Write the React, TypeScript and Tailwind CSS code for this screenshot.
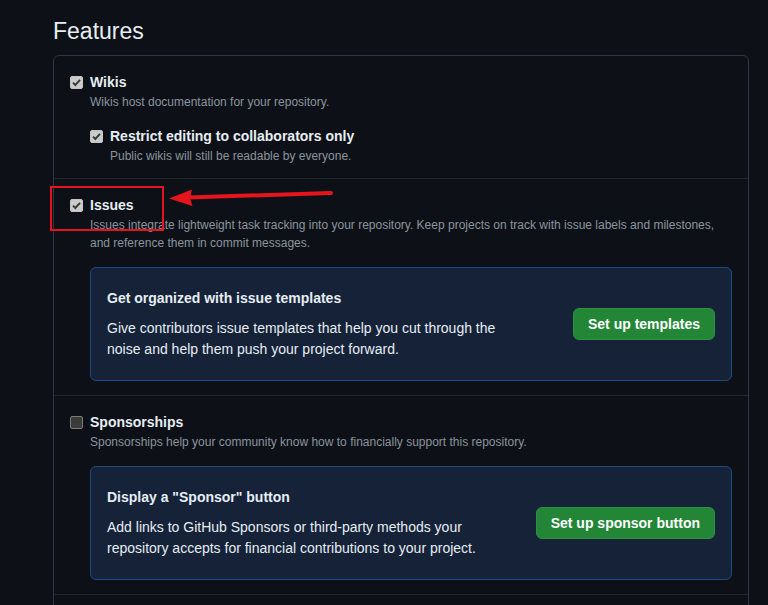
import React from "react";

function Check({ checked }: { checked: boolean }) {
  return (
    <span
      className={
        "relative mt-[4px] h-[13px] w-[13px] shrink-0 rounded-[2px] border " +
        (checked ? "border-[#c4c4c4] bg-[#cbcbcb]" : "border-[#7a7a7a] bg-[#3b3b3b]")
      }
    >
      {checked && (
        <svg viewBox="0 0 13 13" className="absolute -left-px -top-px h-[13px] w-[13px]">
          <path d="M3 6.6 L5.3 9 L10 3.8" fill="none" stroke="#3a3a3a" strokeWidth="1.9" />
        </svg>
      )}
    </span>
  );
}

function Item({
  checked,
  label,
  desc,
  children,
}: {
  checked: boolean;
  label: string;
  desc: string;
  children?: React.ReactNode;
}) {
  return (
    <div className="flex gap-[7px]">
      <Check checked={checked} />
      <div className="flex-1">
        <div className="text-[14px] font-bold leading-[21px] text-[#e6edf3]">{label}</div>
        <p className="text-[12px] leading-[18px] text-[#8b949e]">{desc}</p>
        {children}
      </div>
    </div>
  );
}

function Promo({ title, body, action }: { title: string; body: string; action: string }) {
  return (
    <div className="mt-[15px] flex items-center justify-between rounded-[6px] border border-[#1d4a80] bg-[#152238] px-4 py-5">
      <div>
        <h4 className="mb-[9px] text-[14px] font-bold leading-[21px] text-[#e6edf3]">{title}</h4>
        <p className="max-w-[400px] text-[14px] leading-[21px] text-[#e6edf3]">{body}</p>
      </div>
      <button className="h-[32px] shrink-0 rounded-[6px] border border-[#2f8f42] bg-[#238636] px-[14px] text-[14px] font-bold text-white">
        {action}
      </button>
    </div>
  );
}

export default function App() {
  return (
    <div
      className="relative h-[605px] overflow-hidden bg-[#0d1117] pl-[53px] pr-[19px]"
      style={{ fontFamily: '"Liberation Sans", Arial, sans-serif' }}
    >
      <h2 className="pt-[15px] pb-[7px] text-[23px] leading-[33px] text-[#e6edf3]">Features</h2>
      <div className="rounded-[6px] border border-[#30363d]">
        <section className="border-b border-[#21262d] px-4 pt-4 pb-[13px]">
          <Item checked label="Wikis" desc="Wikis host documentation for your repository.">
            <div className="mt-[15px]">
              <Item checked label="Restrict editing to collaborators only" desc="Public wikis will still be readable by everyone." />
            </div>
          </Item>
        </section>
        <section className="border-b border-[#21262d] px-4 pt-4 pb-[14px]">
          <Item
            checked
            label="Issues"
            desc="Issues integrate lightweight task tracking into your repository. Keep projects on track with issue labels and milestones, and reference them in commit messages."
          >
            <Promo
              title="Get organized with issue templates"
              body="Give contributors issue templates that help you cut through the noise and help them push your project forward."
              action="Set up templates"
            />
          </Item>
        </section>
        <section className="border-b border-[#21262d] px-4 pt-4 pb-[14px]">
          <Item
            checked={false}
            label="Sponsorships"
            desc="Sponsorships help your community know how to financially support this repository."
          >
            <Promo
              title={'Display a "Sponsor" button'}
              body="Add links to GitHub Sponsors or third-party methods your repository accepts for financial contributions to your project."
              action="Set up sponsor button"
            />
          </Item>
        </section>
        <section className="h-[40px]" />
      </div>

      {/* annotation */}
      <div className="absolute left-[50px] top-[186px] h-[45px] w-[114px] border-2 border-[#e5141d]" />
      <svg className="absolute left-[165px] top-[184px]" width="172" height="26" viewBox="0 0 172 26">
        <path d="M22 13.5 L166 9" stroke="#e5141d" strokeWidth="4" strokeLinecap="round" fill="none" />
        <path d="M4 14.5 L27 5.5 L25 14 L27.5 22 Z" fill="#e5141d" />
      </svg>
    </div>
  );
}
